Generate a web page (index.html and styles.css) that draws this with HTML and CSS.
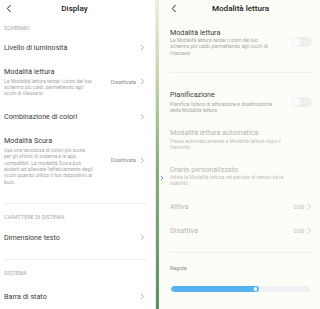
FILE: index.html
```html
<!DOCTYPE html>
<html lang="it">
<head>
<meta charset="utf-8">
<link rel="stylesheet" href="styles.css">
</head>
<body>
<div class="screen">
  <section class="panel left">
    <header class="bar">
      <svg class="back" width="6" height="9" viewBox="0 0 6 9"><path d="M4.5 1 L1.3 4.5 L4.5 8" fill="none" stroke="#222" stroke-width="1"/></svg>
      <h1>Display</h1>
      <span></span>
    </header>

    <div class="label m-s1">SCHERMO</div>
    <div class="row m-r1">
      <div class="txt"><div class="title">Livello di luminosità</div></div>
      <svg class="chev" width="5" height="7" viewBox="0 0 5 7"><path d="M1.2 1 L3.6 3.5 L1.2 6" fill="none" stroke="#9a9a9a" stroke-width="0.8"/></svg>
    </div>
    <div class="row m-r2">
      <div class="txt">
        <div class="title">Modalità lettura</div>
        <div class="desc">La Modalità lettura rende i colori del tuo<br>schermo più caldi, permettendo agli<br>occhi di rilassarsi</div>
      </div>
      <div class="val">Disattivata
        <svg class="chev" width="5" height="7" viewBox="0 0 5 7"><path d="M1.2 1 L3.6 3.5 L1.2 6" fill="none" stroke="#9a9a9a" stroke-width="0.8"/></svg>
      </div>
    </div>
    <div class="row m-r2">
      <div class="txt"><div class="title">Combinazione di colori</div></div>
      <svg class="chev" width="5" height="7" viewBox="0 0 5 7"><path d="M1.2 1 L3.6 3.5 L1.2 6" fill="none" stroke="#9a9a9a" stroke-width="0.8"/></svg>
    </div>
    <div class="row m-r2">
      <div class="txt">
        <div class="title">Modalità Scura</div>
        <div class="desc">Usa una tavolozza di colori più scura<br>per gli sfondi di sistema e le app<br>compatibili. La modalità Scura può<br>aiutarti ad alleviare l'affaticamento degli<br>occhi quando utilizzi il tuo dispositivo al<br>buio.</div>
      </div>
      <div class="val">Disattivata
        <svg class="chev" width="5" height="7" viewBox="0 0 5 7"><path d="M1.2 1 L3.6 3.5 L1.2 6" fill="none" stroke="#9a9a9a" stroke-width="0.8"/></svg>
      </div>
    </div>
    <div class="sep m-sep1"></div>
    <div class="label m-s2">CARATTERE DI SISTEMA</div>
    <div class="row m-r3">
      <div class="txt"><div class="title">Dimensione testo</div></div>
      <svg class="chev" width="5" height="7" viewBox="0 0 5 7"><path d="M1.2 1 L3.6 3.5 L1.2 6" fill="none" stroke="#9a9a9a" stroke-width="0.8"/></svg>
    </div>
    <div class="sep m-sep2"></div>
    <div class="label m-s2">SISTEMA</div>
    <div class="row m-r2">
      <div class="txt"><div class="title">Barra di stato</div></div>
      <svg class="chev" width="5" height="7" viewBox="0 0 5 7"><path d="M1.2 1 L3.6 3.5 L1.2 6" fill="none" stroke="#9a9a9a" stroke-width="0.8"/></svg>
    </div>
  </section>

  <div class="divider"></div>

  <section class="panel right">
    <header class="bar rbar">
      <svg class="back" width="6" height="9" viewBox="0 0 6 9"><path d="M4.5 1 L1.3 4.5 L4.5 8" fill="none" stroke="#222" stroke-width="1"/></svg>
      <h1>Modalità lettura</h1>
      <span></span>
    </header>

    <div class="row rrow q1">
      <div class="txt">
        <div class="title">Modalità lettura</div>
        <div class="desc d0">La Modalità lettura rende i colori del tuo<br>schermo più caldi, permettendo agli occhi di<br>rilassarsi</div>
      </div>
      <div class="toggle"><span class="knob"></span></div>
    </div>
    <div class="sep rsep q2"></div>
    <div class="row rrow q3">
      <div class="txt">
        <div class="title">Pianificazione</div>
        <div class="desc d1">Pianifica l'orario di attivazione e disattivazione<br>della Modalità lettura</div>
      </div>
      <div class="toggle"><span class="knob"></span></div>
    </div>
    <div class="row rrow q4 off">
      <div class="txt">
        <div class="title">Modalità lettura automatica</div>
        <div class="desc d1">Passa automaticamente a Modalità lettura dopo il<br>tramonto</div>
      </div>
    </div>
    <div class="row rrow q5 off mark-row">
      <svg class="mark" width="4" height="6" viewBox="0 0 4 6"><path d="M0.8 0.8 L3 3 L0.8 5.2" fill="none" stroke="#3d8fe0" stroke-width="0.9"/></svg>
      <div class="txt">
        <div class="title">Orario personalizzato</div>
        <div class="desc d0">Attiva la Modalità lettura nel periodo di tempo da te<br>stabilito</div>
      </div>
    </div>
    <div class="row rrow q6 off">
      <div class="txt"><div class="title">Attiva</div></div>
      <div class="val rval">0:00
        <svg class="chev" width="5" height="7" viewBox="0 0 5 7"><path d="M1.2 1 L3.6 3.5 L1.2 6" fill="none" stroke="#b5b5b5" stroke-width="0.8"/></svg>
      </div>
    </div>
    <div class="row rrow q7 off">
      <div class="txt"><div class="title">Disattiva</div></div>
      <div class="val rval">0:00
        <svg class="chev" width="5" height="7" viewBox="0 0 5 7"><path d="M1.2 1 L3.6 3.5 L1.2 6" fill="none" stroke="#b5b5b5" stroke-width="0.8"/></svg>
      </div>
    </div>
    <div class="sep rsep q8"></div>
    <div class="reg">Regola</div>
    <div class="slider"><div class="fill" style="width:63%"><span class="dot"></span></div></div>
  </section>
</div>
</body>
</html>
```

FILE: styles.css
```css
* { margin: 0; padding: 0; box-sizing: border-box; }

body {
  width: 320px;
  height: 309px;
  overflow: hidden;
  background: #fff;
  font-family: Roboto, "Noto Sans", "Liberation Sans", sans-serif;
  color: #1f1f1f;
}

.screen { display: flex; height: 309px; }

.panel { height: 309px; overflow: hidden; }

.left {
  width: 156px;
  background: #fff;
  border-right: 1px solid #e9e9e9;
  padding: 0 10px 0 4px;
}

.divider {
  width: 3px;
  background: linear-gradient(#efefdb 0%, #c4d4ad 25%, #86ad80 55%, #5e8f60 100%);
}

.right {
  flex: 1;
  background: #fdfdf7;
  padding: 0 8px 0 11px;
  position: relative;
}

.bar {
  height: 17px;
  display: grid;
  grid-template-columns: 20px 1fr 20px;
  align-items: center;
}
.bar h1 {
  font-size: 8.1px;
  font-weight: 500;
  text-align: center;
  color: #1a1a1a;
  line-height: 9px;
}
.back { display: block; margin-left: 2px; }
.rbar { margin-left: -1px; }

.label {
  font-size: 5.4px;
  line-height: 7px;
  color: #a3a8b0;
  letter-spacing: 0.05px;
}
.m-s1 { margin-top: 7.5px; }
.m-s2 { margin-top: 10px; }

.row {
  display: flex;
  align-items: center;
  justify-content: space-between;
}
.m-r1 { margin-top: 11px; }
.m-r2 { margin-top: 15px; }
.m-r3 { margin-top: 12px; }

.title {
  font-size: 7.2px;
  line-height: 9px;
  color: #3a3a3a;
  white-space: nowrap;
}
.desc {
  font-size: 5px;
  line-height: 6.4px;
  color: #a5a5a5;
  margin-top: 2px;
  white-space: nowrap;
}

.val {
  display: flex;
  align-items: center;
  gap: 4px;
  font-size: 5.3px;
  color: #8a8a8a;
  white-space: nowrap;
}
.chev { display: block; flex: none; }

.sep { height: 1px; background: #f1f1f1; margin-right: -2px; }
.m-sep1 { margin-top: 18px; }
.m-sep2 { margin-top: 17px; }

/* right panel */
.q1 { margin-top: 10.5px; }
.q1 .desc { margin-top: 0; line-height: 6.6px; }
.q2 { margin-top: 15.4px; }
.rsep { background: #efefea; margin-right: 0; }
.q3 { margin-top: 17.8px; }
.q3 .desc { margin-top: 1.3px; line-height: 6.2px; }
.q4 { margin-top: 14.6px; }
.q4 .desc { margin-top: 1.3px; line-height: 6px; }
.q5 { margin-top: 14.5px; }
.q5 .desc { margin-top: 0; line-height: 6.6px; }
.q6 { margin-top: 15.5px; }
.q7 { margin-top: 15px; }
.q8 { margin-top: 16.8px; }

.off .title { color: #b4b4b4; }
.off .desc { color: #bdbdbd; }

.mark-row { position: relative; }
.mark { position: absolute; left: -10px; top: 10px; }

.toggle {
  width: 21px;
  height: 10px;
  border-radius: 5px;
  background: #efefef;
  padding: 1px;
  flex: none;
}
.toggle .knob {
  display: block;
  width: 8px;
  height: 8px;
  border-radius: 50%;
  background: #fbfbfb;
}

.rval { color: #b3b3b3; gap: 3px; }

.reg {
  margin-top: 11.5px;
  font-size: 5.5px;
  line-height: 7px;
  color: #8c8c8c;
}

.slider {
  margin-top: 14.2px;
  margin-left: 1px;
  width: 139px;
  height: 6.5px;
  border-radius: 3.5px;
  background: #eff1f4;
  overflow: hidden;
}
.slider .fill {
  height: 100%;
  background: #58b3f5;
  border-radius: 3.5px;
  display: flex;
  align-items: center;
  justify-content: flex-end;
  padding-right: 1.5px;
}
.slider .dot {
  width: 3.4px;
  height: 3.4px;
  border-radius: 50%;
  background: #fff;
}
```
